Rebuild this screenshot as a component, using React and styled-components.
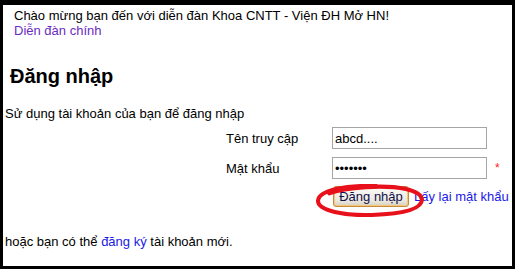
import styled, { createGlobalStyle } from "styled-components"

const GlobalStyle = createGlobalStyle`
    html, body {
        margin: 0;
        padding: 0;
        background: #000000;
    }
    body {
        font-family: "Liberation Sans", Arial, sans-serif;
        font-size: 13px;
        color: #000000;
    }
`

export default function App() {

    return (
        <>
            <GlobalStyle />
            <Frame>
                <Header>
                    <Line>Chào mừng bạn đến với diễn đàn Khoa CNTT - Viện ĐH Mở HN!</Line>
                    <Line><VisitedLink href="#">Diễn đàn chính</VisitedLink></Line>
                </Header>
                <Title>Đăng nhập</Title>
                <Body>
                    <Line>Sử dụng tài khoản của bạn để đăng nhập</Line>
                    <LoginForm onSubmit={(e) => e.preventDefault()}>
                        <Label>Tên truy cập</Label>
                        <FormInput defaultValue="abcd...." />
                        <span></span>
                        <Label>Mật khẩu</Label>
                        <FormInput type="password" defaultValue="1234567" />
                        <Required>*</Required>
                        <span></span>
                        <ButtonRow>
                            <Highlight>
                                <FormButton type="submit">Đăng nhập</FormButton>
                                <Circle viewBox="0 0 108 32" preserveAspectRatio="none" aria-hidden="true">
                                    <path d="M60 2 C 30 1, 4 6, 3 16 C 2 26, 30 31, 56 30 C 84 29, 105 25, 105 15 C 104 6, 82 1, 50 3 C 35 4, 22 6, 14 9"
                                        fill="none" stroke="#e8101a" strokeWidth="4" strokeLinecap="round" />
                                </Circle>
                            </Highlight>
                            <BlueLink href="#">Lấy lại mật khẩu</BlueLink>
                        </ButtonRow>
                    </LoginForm>
                    <Footer>
                        hoặc bạn có thể <BlueLink href="#">đăng ký</BlueLink> tài khoản mới.
                    </Footer>
                </Body>
            </Frame>
        </>
    )
}

const Frame = styled.div`
    margin: 5px 3px 0 3px;
    height: 261px;
    background: #ffffff;
    overflow: hidden;
`

const Header = styled.div`
    padding: 3px 0 0 11px;
`

const Line = styled.div`
    line-height: 15px;
    white-space: nowrap;
`

const VisitedLink = styled.a`
    color: #6a2cc0;
    text-decoration: none;
`

const BlueLink = styled.a`
    color: #1a1ae6;
    text-decoration: none;
    white-space: nowrap;
`

const Title = styled.h2`
    margin: 26px 0 0 7px;
    font-size: 20px;
    line-height: 24px;
    font-weight: 700;
`

const Body = styled.div`
    padding-left: 2px;
    margin-top: 18px;
`

const LoginForm = styled.form`
    display: grid;
    grid-template-columns: 106px 155px 1fr;
    row-gap: 8px;
    align-items: center;
    margin: 6px 0 0 221px;
`

const Label = styled.label`
    line-height: 15px;
`

const FormInput = styled.input`
    box-sizing: border-box;
    width: 155px;
    height: 22px;
    border: 1px solid #a5a5a5;
    padding: 0 2px;
    font-family: "Liberation Sans", Arial, sans-serif;
    font-size: 13px;
    color: #000000;
    outline: none;
`

const Required = styled.span`
    color: #ff2020;
    font-size: 12px;
    padding-left: 8px;
    line-height: 12px;
`

const ButtonRow = styled.div`
    grid-column: 2 / 4;
    display: flex;
    align-items: center;
    gap: 5px;
    margin-top: -1px;
    white-space: nowrap;
`

const Highlight = styled.div`
    position: relative;
    margin-left: 1px;
`

const FormButton = styled.button`
    display: block;
    box-sizing: border-box;
    width: 76px;
    height: 21px;
    padding: 0;
    border: 1px solid #c98a3a;
    border-radius: 3px;
    background: linear-gradient(#fbfbf8, #ece9e0 70%, #d6d0c0);
    box-shadow: inset 0 0 0 1px #f3c87a;
    font-family: "Liberation Sans", Arial, sans-serif;
    font-size: 13px;
    color: #10104a;
`

const Circle = styled.svg`
    position: absolute;
    left: -18px;
    top: -2px;
    width: 110px;
    height: 33px;
    pointer-events: none;
`

const Footer = styled.div`
    margin-top: 27px;
    line-height: 15px;
    white-space: nowrap;
`
